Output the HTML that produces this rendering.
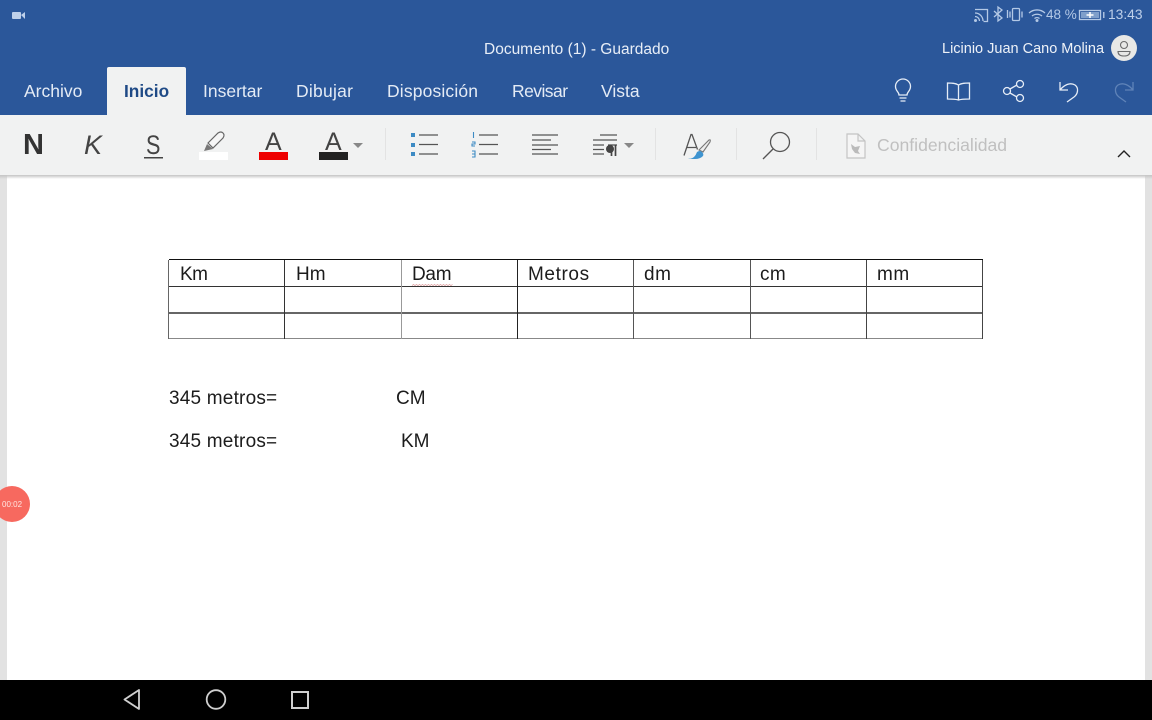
<!DOCTYPE html>
<html><head><meta charset="utf-8"><style>
html,body{margin:0;padding:0}
body{width:1152px;height:720px;overflow:hidden;position:relative;background:#fff;font-family:"Liberation Sans",sans-serif}
.a{position:absolute;white-space:nowrap}
.tab{position:absolute;top:81px;font-size:17.5px;line-height:21px;color:#e4ebf5;white-space:nowrap}
.d{position:absolute;white-space:nowrap;font-size:19px;line-height:20px;color:#1c1c1c}
.l{position:absolute;background:#333}
svg{position:absolute;left:0;top:0}
</style></head><body>
<div class="a" style="left:0;top:0;width:1152px;height:115px;background:#2b579a"></div>
<div class="a" style="left:107px;top:67px;width:79px;height:50px;background:#f1f2f2;border-radius:2px 2px 0 0"></div>
<div class="a" style="left:0;top:115px;width:1152px;height:60px;background:#f1f2f2"></div>
<div class="a" style="left:0;top:175px;width:1152px;height:505px;background:#e2e2e2"></div>
<div class="a" style="left:7px;top:175px;width:1138px;height:505px;background:#fff"></div>
<div class="a" style="left:0;top:175px;width:1152px;height:4px;background:linear-gradient(#c4c4c4,rgba(225,225,225,0))"></div>
<div class="a" style="left:0;top:680px;width:1152px;height:40px;background:#000"></div>

<div class="a" style="left:484px;top:41px;font-size:15.5px;line-height:18px;color:#e8eef7">Documento (1) - Guardado</div>
<div class="a" style="left:942px;top:41px;font-size:14.5px;line-height:17px;color:#eef2f8">Licinio Juan Cano Molina</div>
<div class="a" style="left:1046px;top:7px;font-size:13.5px;line-height:16px;color:#b4c9e6">48 %</div>
<div class="a" style="left:1108px;top:7px;font-size:13.8px;line-height:16px;color:#bed0ea">13:43</div>

<div class="tab" style="left:24px">Archivo</div>
<div class="tab" style="left:124px;color:#1f4a86;font-weight:bold;font-size:17.300px">Inicio</div>
<div class="tab" style="left:203px">Insertar</div>
<div class="tab" style="left:296px;letter-spacing:.25px">Dibujar</div>
<div class="tab" style="left:387px;letter-spacing:.15px">Disposición</div>
<div class="tab" style="left:512px;letter-spacing:-.55px">Revisar</div>
<div class="tab" style="left:601px">Vista</div>

<div class="a" style="left:23px;top:129px;font-size:29px;line-height:32px;font-weight:bold;color:#333">N</div>
<div class="a" style="left:84px;top:129px;font-size:27px;line-height:32px;font-style:italic;color:#444">K</div>
<div class="a" style="left:146px;top:129px;font-size:27px;line-height:32px;color:#444;transform:scaleX(.8);transform-origin:left center">S</div>
<div class="a" style="left:265px;top:128px;font-size:25px;line-height:28px;color:#444">A</div>
<div class="a" style="left:325px;top:128px;font-size:25px;line-height:28px;color:#444">A</div>
<div class="a" style="left:877px;top:135px;font-size:17.600px;line-height:21px;color:#c0c0c0">Confidencialidad</div>

<svg width="1152" height="720" viewBox="0 0 1152 720" fill="none">
<!-- camera -->
<rect x="12" y="12" width="9" height="7" rx="1" fill="#bed0ea"/><path d="M21 15l4-3v7z" fill="#bed0ea"/>
<!-- status icons -->
<g stroke="#b4c9e6" stroke-width="1.300">
<path d="M975 9.500h12.500v12h-4"/><path d="M975 13a8 8 0 0 1 8 8M975 16.500a4.500 4.500 0 0 1 4.500 4.500"/>
<path d="M994 11l8 7-4 3v-14l4 3-8 7"/>
<rect x="1012.500" y="8.500" width="7" height="12" rx="1"/><path d="M1007.500 10v8M1010 11.500v6M1022 11.500v6"/>
<path d="M1029 13a12 12 0 0 1 16 0M1032 16a8 8 0 0 1 10 0M1034.500 18.500a4 4 0 0 1 5 0"/>
<rect x="1079.500" y="10.500" width="21" height="9"/>
</g>
<circle cx="975.500" cy="20.500" r="1.500" fill="#b4c9e6"/><circle cx="1037" cy="20.500" r="1.500" fill="#b4c9e6"/>
<rect x="1081" y="12" width="18" height="6" fill="#7f9fcb"/>
<path d="M1086.500 15h7M1090 12v6" stroke="#fff" stroke-width="1.500"/>
<rect x="1103" y="12" width="1.500" height="6" fill="#a9bfdf"/>
<!-- avatar -->
<circle cx="1124" cy="48" r="13" fill="#e8e8e6"/>
<circle cx="1124" cy="45" r="3.500" stroke="#6b6b6b" stroke-width="1.100"/><path d="M1118 51.500h12q0 4.500-6 4.500t-6-4.500z" stroke="#6b6b6b" stroke-width="1.100"/>
<!-- header right icons -->
<g stroke="#e6edf7" stroke-width="1.300">
<path d="M899 95c0-3-3.500-4-3.500-8.500a7.500 7.500 0 0 1 15 0c0 4.500-3.500 5.500-3.500 8.500z"/><path d="M899.500 98h7M900.500 101h5"/>
<path d="M958.500 85c-3-2-7-2-11-2v16c4 0 8 0 11 1 3-1 7-1 11-1v-16c-4 0-8 0-11 2zM958.500 85v15"/>
<circle cx="1007" cy="91" r="3.500"/><circle cx="1020" cy="84" r="3.500"/><circle cx="1020" cy="98" r="3.500"/><path d="M1010 89l7-4M1010 93l7 4"/>
<path d="M1060 82v8h8M1060 90c4-5 10-8 15-5 4 3 3 9-1 12l-7 5"/>
</g>
<path d="M1133 82v8h-8M1133 90c-4-5-10-8-15-5-4 3-3 9 1 12l7 5" stroke="#5f83b8" stroke-width="1.300"/>
<!-- underline S -->
<rect x="144" y="157" width="19" height="1.500" fill="#444"/>
<!-- highlighter -->
<rect x="199" y="152" width="29" height="8" fill="#fff"/>
<path d="M208 143l10-10q3-2 5 0t0 5l-10 10z" stroke="#666" stroke-width="1.200" fill="#f6f6f6"/><path d="M204 151l3-7 6 5z" fill="#777"/>
<!-- colour bars -->
<rect x="259" y="152" width="29" height="8" fill="#ee0000"/>
<rect x="319" y="152" width="29" height="8" fill="#222"/>
<path d="M353 143h10l-5 5z" fill="#888"/><path d="M624 143h10l-5 5z" fill="#888"/>
<!-- separators -->
<path d="M385.500 128v32M655.500 128v32M736.500 128v32M816.500 128v32" stroke="#e3e3e3"/>
<!-- bullets -->
<g fill="#3d8bc4"><rect x="411" y="133" width="4" height="4"/><rect x="411" y="143" width="4" height="4"/><rect x="411" y="152" width="4" height="4"/></g>
<g stroke="#555" stroke-width="1.200">
<path d="M419 135h19M419 144.500h19M419 154h19"/>
<path d="M479 135h19M479 144.500h19M479 154h19"/>
<path d="M532 135h26M532 140h19M532 145h26M532 149.500h19M532 154h26"/>
<path d="M600 135h17M593 140h24M593 145h11M593 149.500h11M593 154h11"/>
</g>
<g stroke="#3d8bc4" stroke-width="1.100"><path d="M473.500 132v6M472 142h3v2h-3v2h3M472 151h3v6h-3M472 154h3"/></g>
<path d="M611.500 145v11M615.500 145v11" stroke="#444" stroke-width="1.700"/><circle cx="610" cy="149" r="4" fill="#444"/><path d="M608 145h9" stroke="#444" stroke-width="1.200"/>
<!-- styles -->
<path d="M684 155.500l7-21h1l5.500 15M687 147.500h9" stroke="#555" stroke-width="1.300"/>
<path d="M699 150l10-10q2-1 1 2l-7 10z" stroke="#777" stroke-width="1.100" fill="#eee"/>
<path d="M688 158q4 1 6-1t3-5q3-2 5 0t1 4q-3 3-8 3t-7-1z" fill="#3f94d0"/>
<!-- search -->
<circle cx="780" cy="142" r="9.500" stroke="#555" stroke-width="1.300"/><path d="M773 149l-10 10" stroke="#555" stroke-width="1.300"/>
<!-- doc icon -->
<path d="M847 134h11l7 7v17h-18zM858 134v7h7" stroke="#c4c4c4" stroke-width="1.200" fill="#f5f5f5"/>
<path d="M851 144l4 3 5-1-2 5 2 3-5-1-3-4z" fill="#bbb"/>
<!-- chevron -->
<path d="M1118 157l6-6 6 6" stroke="#222" stroke-width="1.400"/>
<!-- squiggle -->
<path d="M412 285.500l1.500-1 1.500 1 1.500-1 1.500 1 1.500-1 1.500 1 1.500-1 1.500 1 1.500-1 1.500 1 1.500-1 1.500 1 1.500-1 1.500 1 1.500-1 1.500 1 1.500-1 1.500 1 1.500-1 1.500 1 1.500-1 1.500 1 1.500-1 1.500 1 1.500-1 1.500 1 1.500-1" stroke="#d98a8a" stroke-width=".7"/>
<!-- nav -->
<path d="M124.500 699.500l14.500-9.500v19z" stroke="#cfcfcf" stroke-width="1.800" stroke-linejoin="round"/>
<circle cx="216" cy="699.500" r="9.300" stroke="#cfcfcf" stroke-width="1.800"/>
<rect x="292" y="692" width="16" height="16" stroke="#cfcfcf" stroke-width="2"/>
</svg>

<!-- table -->
<div class="l" style="left:169px;top:259px;width:814px;height:1px;background:#111"></div>
<div class="l" style="left:169px;top:286px;width:814px;height:1px;background:#333"></div>
<div class="l" style="left:169px;top:312px;width:814px;height:2px;background:#666"></div>
<div class="l" style="left:169px;top:338px;width:814px;height:1px;background:#888"></div>
<div class="l" style="left:168px;top:260px;width:1px;height:79px;background:#666"></div>
<div class="l" style="left:284px;top:260px;width:1px;height:79px;background:#333"></div>
<div class="l" style="left:401px;top:260px;width:1px;height:79px;background:#999"></div>
<div class="l" style="left:517px;top:260px;width:1px;height:79px;background:#222"></div>
<div class="l" style="left:633px;top:260px;width:1px;height:79px;background:#555"></div>
<div class="l" style="left:750px;top:260px;width:1px;height:79px;background:#555"></div>
<div class="l" style="left:866px;top:260px;width:1px;height:79px;background:#444"></div>
<div class="l" style="left:982px;top:260px;width:1px;height:79px;background:#444"></div>

<div class="d" style="left:180px;top:265px;letter-spacing:-.5px">Km</div>
<div class="d" style="left:296px;top:265px">Hm</div>
<div class="d" style="left:412px;top:265px;letter-spacing:-.3px">Dam</div>
<div class="d" style="left:528px;top:265px;letter-spacing:.6px">Metros</div>
<div class="d" style="left:644px;top:265px;letter-spacing:.6px">dm</div>
<div class="d" style="left:760px;top:265px;letter-spacing:.4px">cm</div>
<div class="d" style="left:877px;top:265px;letter-spacing:.6px">mm</div>
<div class="d" style="left:169px;top:389px;letter-spacing:.2px">345 metros=</div>
<div class="d" style="left:396px;top:389px">CM</div>
<div class="d" style="left:169px;top:432px;letter-spacing:.2px">345 metros=</div>
<div class="d" style="left:401px;top:432px">KM</div>

<!-- recorder -->
<div class="a" style="left:-6px;top:486px;width:36px;height:36px;border-radius:50%;background:#f7695f"></div>
<div class="a" style="left:2px;top:500px;font-size:8px;line-height:10px;color:#ffe6e2">00:02</div>
</body></html>
